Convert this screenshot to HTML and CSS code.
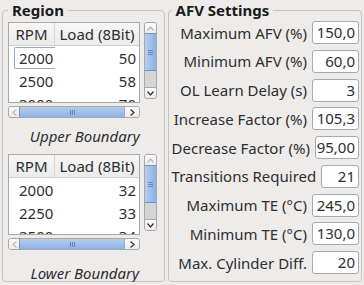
FILE: index.html
```html
<!DOCTYPE html>
<html lang="en">
<head>
    <meta charset="UTF-8">
    <title>AFV Settings</title>
    <link rel="stylesheet" href="styles.css">
</head>
<body>
    <div class="panels">
        <fieldset class="group region-group">
            <legend>Region</legend>

            <div class="scroller">
                <div class="table">
                    <div class="thead">
                        <span class="col-rpm">RPM</span>
                        <span class="col-load">Load (8Bit)</span>
                    </div>
                    <div class="trow">
                        <span class="col-rpm"><span class="cell-focus">2000</span></span>
                        <span class="col-load">50</span>
                    </div>
                    <div class="trow">
                        <span class="col-rpm">2500</span>
                        <span class="col-load">58</span>
                    </div>
                    <div class="trow">
                        <span class="col-rpm">3000</span>
                        <span class="col-load">70</span>
                    </div>
                </div>
                <div class="vscroll">
                    <div class="sb-btn sb-up">
                        <svg width="7" height="5" viewBox="0 0 7 5"><path d="M0.5 4.5 L3.5 1 L6.5 4.5" fill="none" stroke="#b8b8b8" stroke-width="1.2"/></svg>
                    </div>
                    <div class="sb-thumb-v"><span class="grip-v"></span></div>
                    <div class="sb-track"></div>
                    <div class="sb-btn sb-down">
                        <svg width="7" height="5" viewBox="0 0 7 5"><path d="M0.5 0.5 L3.5 4 L6.5 0.5" fill="none" stroke="#333" stroke-width="1.2"/></svg>
                    </div>
                </div>
                <div class="hscroll">
                    <div class="sb-btn sb-left">
                        <svg width="5" height="7" viewBox="0 0 5 7"><path d="M4.5 0.5 L1 3.5 L4.5 6.5" fill="none" stroke="#b8b8b8" stroke-width="1.2"/></svg>
                    </div>
                    <div class="sb-thumb-h"><span class="grip-h"></span></div>
                    <div class="sb-btn sb-right">
                        <svg width="5" height="7" viewBox="0 0 5 7"><path d="M0.5 0.5 L4 3.5 L0.5 6.5" fill="none" stroke="#333" stroke-width="1.2"/></svg>
                    </div>
                </div>
            </div>
            <p class="caption">Upper Boundary</p>

            <div class="scroller">
                <div class="table">
                    <div class="thead">
                        <span class="col-rpm">RPM</span>
                        <span class="col-load">Load (8Bit)</span>
                    </div>
                    <div class="trow">
                        <span class="col-rpm">2000</span>
                        <span class="col-load">32</span>
                    </div>
                    <div class="trow">
                        <span class="col-rpm">2250</span>
                        <span class="col-load">33</span>
                    </div>
                    <div class="trow">
                        <span class="col-rpm">2500</span>
                        <span class="col-load">34</span>
                    </div>
                </div>
                <div class="vscroll">
                    <div class="sb-btn sb-up">
                        <svg width="7" height="5" viewBox="0 0 7 5"><path d="M0.5 4.5 L3.5 1 L6.5 4.5" fill="none" stroke="#b8b8b8" stroke-width="1.2"/></svg>
                    </div>
                    <div class="sb-thumb-v"><span class="grip-v"></span></div>
                    <div class="sb-track"></div>
                    <div class="sb-btn sb-down">
                        <svg width="7" height="5" viewBox="0 0 7 5"><path d="M0.5 0.5 L3.5 4 L6.5 0.5" fill="none" stroke="#333" stroke-width="1.2"/></svg>
                    </div>
                </div>
                <div class="hscroll">
                    <div class="sb-btn sb-left">
                        <svg width="5" height="7" viewBox="0 0 5 7"><path d="M4.5 0.5 L1 3.5 L4.5 6.5" fill="none" stroke="#b8b8b8" stroke-width="1.2"/></svg>
                    </div>
                    <div class="sb-thumb-h"><span class="grip-h"></span></div>
                    <div class="sb-btn sb-right">
                        <svg width="5" height="7" viewBox="0 0 5 7"><path d="M0.5 0.5 L4 3.5 L0.5 6.5" fill="none" stroke="#333" stroke-width="1.2"/></svg>
                    </div>
                </div>
            </div>
            <p class="caption caption-last">Lower Boundary</p>
        </fieldset>

        <fieldset class="group afv-group">
            <legend>AFV Settings</legend>
            <div class="field"><label>Maximum AFV (%)</label><span class="spin">150,0</span></div>
            <div class="field"><label>Minimum AFV (%)</label><span class="spin">60,0</span></div>
            <div class="field"><label>OL Learn Delay (s)</label><span class="spin">3</span></div>
            <div class="field"><label>Increase Factor (%)</label><span class="spin">105,3</span></div>
            <div class="field"><label>Decrease Factor (%)</label><span class="spin">95,00</span></div>
            <div class="field"><label>Transitions Required</label><span class="spin">21</span></div>
            <div class="field"><label>Maximum TE (°C)</label><span class="spin">245,0</span></div>
            <div class="field"><label>Minimum TE (°C)</label><span class="spin">130,0</span></div>
            <div class="field"><label>Max. Cylinder Diff.</label><span class="spin">20</span></div>
        </fieldset>
    </div>
</body>
</html>
```

FILE: styles.css
```css
:root {
    --window-bg: #edeceb;
    --text: #2e2e2e;
    --frame: #c6c3bf;
    --field-border: #a9a9a9;
    --thumb-top: #b4cdee;
    --thumb-bottom: #8db2e2;
    --thumb-border: #6b93c9;
}

body {
    margin: 0;
    background-color: var(--window-bg);
    font-family: 'Noto Sans', 'Open Sans', sans-serif;
    font-size: 15px;
    color: var(--text);
}

.panels {
    display: flex;
    gap: 3px;
    padding: 1px 2px 0 2px;
}

/* Group boxes */
.group {
    box-sizing: border-box;
    margin: 0;
    min-width: 0;
    border: 1px solid var(--frame);
    border-radius: 4px;
    height: 281px;
}
.group legend {
    padding: 0 4px;
    font-weight: 700;
    line-height: 18px;
    color: #1a1a1a;
}

.region-group {
    width: 163px;
    padding: 3px 6px 0 5px;
}
.afv-group {
    width: 195px;
    padding: 2px 2px 0 3px;
    display: flex;
    flex-direction: column;
    gap: 5.75px;
}

/* Table + scrollbars */
.scroller {
    display: grid;
    grid-template-columns: 132px 13px;
    grid-template-rows: 81px 12px;
    column-gap: 4px;
    row-gap: 3px;
}

.table {
    border: 1px solid #a8a8a8;
    background: #ffffff;
    overflow: hidden;
}
.thead,
.trow {
    display: flex;
    height: 23px;
    align-items: center;
}
.thead {
    height: 22px;
    background: linear-gradient(#f7f7f7, #ebebeb);
    border-bottom: 1px solid #d0d0d0;
}
.thead .col-rpm {
    border-right: 1px solid #d6d6d6;
    text-align: center;
    padding: 0;
    line-height: 22px;
}
.thead .col-load {
    text-align: center;
    padding: 0;
}
.col-rpm {
    box-sizing: border-box;
    width: 46px;
    flex: none;
    padding-left: 10px;
}
.col-load {
    flex: 1;
    text-align: right;
    padding-right: 3px;
}
.col-rpm .cell-focus {
    display: block;
    margin-left: -5px;
    padding-left: 4px;
    line-height: 20px;
    border: 1px solid #95abc8;
    border-right: none;
    border-radius: 2px 0 0 2px;
}

.vscroll {
    display: flex;
    flex-direction: column;
    height: 77px;
    border: 1px solid #a9a9a9;
    border-radius: 3px;
    background: #d5d5d5;
    overflow: hidden;
    box-sizing: border-box;
}
.hscroll {
    display: flex;
    border: 1px solid #a9a9a9;
    border-radius: 3px;
    background: #d5d5d5;
    overflow: hidden;
    box-sizing: border-box;
}

.sb-btn {
    display: flex;
    align-items: center;
    justify-content: center;
    background: linear-gradient(#fbfbfb, #ececec);
    flex: none;
}
.sb-up { height: 10px; }
.sb-down {
    height: 10px;
    margin-top: auto;
    border-top: 1px solid #a9a9a9;
}
.sb-left { width: 10px; }
.sb-right {
    width: 14px;
    border-left: 1px solid #a9a9a9;
}

.sb-thumb-v {
    height: 36px;
    display: flex;
    align-items: center;
    justify-content: center;
    background: linear-gradient(90deg, var(--thumb-top), var(--thumb-bottom));
    border-top: 1px solid var(--thumb-border);
    border-bottom: 1px solid var(--thumb-border);
}
.sb-track { flex: 1; }

.sb-thumb-h {
    flex: 1;
    display: flex;
    align-items: center;
    justify-content: center;
    background: linear-gradient(var(--thumb-top), var(--thumb-bottom));
    border-left: 1px solid var(--thumb-border);
}

.grip-v {
    width: 5px;
    height: 5px;
    background: repeating-linear-gradient(#5f86bd 0 1px, transparent 1px 2px);
}
.grip-h {
    width: 5px;
    height: 5px;
    background: repeating-linear-gradient(90deg, #5f86bd 0 1px, transparent 1px 2px);
}

.caption {
    margin: 0;
    padding: 9px 0 9px 4px;
    line-height: 18px;
    text-align: center;
    font-style: italic;
}
.caption-last {
    padding-top: 14px;
    padding-bottom: 0;
}

/* AFV fields */
.field {
    display: flex;
    align-items: center;
    justify-content: flex-end;
    gap: 5px;
    height: 23px;
}
.field label {
    white-space: nowrap;
}
.spin {
    box-sizing: border-box;
    width: 47px;
    height: 23px;
    line-height: 21px;
    padding-right: 3px;
    text-align: right;
    background: #ffffff;
    border: 1px solid var(--field-border);
    border-radius: 3px;
}
```
